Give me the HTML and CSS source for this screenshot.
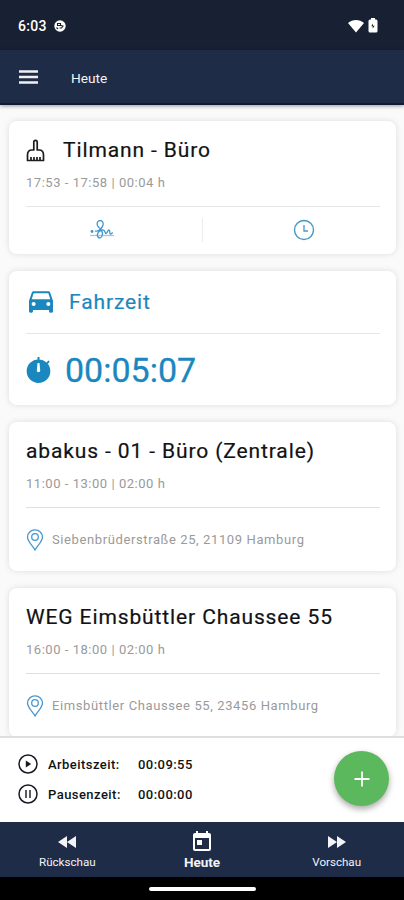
FILE: index.html
```html
<!DOCTYPE html>
<html lang="de">
<head>
    <meta charset="UTF-8">
    <meta name="viewport" content="width=device-width, initial-scale=1">
    <title>Heute</title>
    <link rel="stylesheet" href="styles.css">
</head>
<body>
    <div class="status">
        <span class="clock">6:03</span>
        <svg class="ball" viewBox="0 0 12 12"><circle cx="6" cy="6" r="5.700" fill="#fff"/><path d="M3.500 3.500h3v2h-3zM7 5.500l2 .5-1.500 2H5.500M2.500 7.500L4 9" fill="none" stroke="#182033" stroke-width="1.100"/></svg>
        <svg class="wifi" viewBox="0 0 16 14"><path d="M0 4C4.600 0 11.400 0 16 4L8 13.500z" fill="#fff"/></svg>
        <svg class="battery" viewBox="0 0 10 15"><path d="M3 0h4v1.500h1q1.500 0 1.500 1.500v10q0 1.500-1.500 1.500H2Q.5 14.500.5 13V3Q.5 1.500 2 1.500h1z" fill="#fff"/><path d="M5 5.500L3.300 8.300h1.400V10.500L6.700 7.700H5z" fill="#182033"/></svg>
    </div>
    <header class="appbar">
        <svg class="burger" viewBox="0 0 20 14"><path d="M0 1.500h19M0 7h19M0 12.500h19" stroke="#f1eff0" stroke-width="2.500"/></svg>
        <h1>Heute</h1>
    </header>

    <main class="list">
        <section class="card done">
            <div class="title">
                <svg class="broom" viewBox="0 0 19 23"><path d="M7.800 11V3a1.700 1.700 0 0 1 3.400 0v8h1.800q4.500 0 4.500 5v5.500h-16V16q0-5 4.500-5zM5 21.500V18M8 21.500V18M11 21.500V18M14 21.500V18" fill="none" stroke="#1c1c1c" stroke-width="1.700" stroke-linejoin="round"/></svg>
                <h2>Tilmann - Büro</h2>
            </div>
            <p class="time">17:53 - 17:58 | 00:04 h</p>
            <div class="actions">
                <div class="action">
                    <svg class="sign" viewBox="0 0 24 20"><path d="M0 15.500h24" stroke="#9ccbe6" stroke-width="1.300"/><path d="M5 11c3 1 7-2 8-6 .6-3-1-4.500-3-4.500S6.500 3 7.500 5.500s5 4 5 8-3 5.500-4.500 3.500 0-6.500 4-7 2.500 3.500 4 3.500 1.500-3.500 3-3.500 0 4 1.500 4 1-1.500 2.500-1" fill="none" stroke="#4095cb" stroke-width="1.300"/><circle cx="2" cy="11.500" r="1.400" fill="#4095cb"/></svg>
                </div>
                <div class="action">
                    <svg class="time-icon" viewBox="0 0 22 22"><circle cx="11" cy="11" r="9.500" fill="none" stroke="#4799c5" stroke-width="1.400"/><path d="M11 6v6h4" fill="none" stroke="#4799c5" stroke-width="1.300"/></svg>
                </div>
            </div>
        </section>

        <section class="card drive">
            <div class="title">
                <svg class="car" viewBox="3 4 18 16"><path fill="#1b87bf" d="M18.920 5.010C18.720 4.420 18.160 4 17.500 4h-11c-.66 0-1.210.42-1.420 1.010L3 11v8c0 .55.45 1 1 1h1c.55 0 1-.45 1-1v-1h12v1c0 .55.45 1 1 1h1c.55 0 1-.45 1-1v-8zM6.500 15c-.83 0-1.500-.67-1.500-1.500S5.670 12 6.500 12s1.500.67 1.500 1.500S7.330 15 6.500 15m11 0c-.83 0-1.500-.67-1.500-1.500s.67-1.500 1.500-1.500 1.500.67 1.500 1.500-.67 1.500-1.500 1.500M5 10l1.500-4.500h11L19 10z"/></svg>
                <h2>Fahrzeit</h2>
            </div>
            <div class="timer">
                <svg class="stopwatch" viewBox="0 0 24 26"><circle cx="12" cy="14.200" r="11.800" fill="#1b87bf"/><path d="M12 0v4M20.500 6.500l2-2.500" stroke="#1b87bf" stroke-width="2"/><path d="M11 6h2l.7 7.500a1.700 1.700 0 0 1-3.400 0z" fill="#fff"/></svg>
                <span>00:05:07</span>
            </div>
        </section>

        <section class="card job">
            <h2>abakus - 01 - Büro (Zentrale)</h2>
            <p class="time">11:00 - 13:00 | 02:00 h</p>
            <div class="address">
                <svg class="pin" viewBox="0 0 17 22"><path d="M8.500 21C6 16.500 1 12.500 1 8a7.500 7.200 0 0 1 15 0c0 4.500-5 8.500-7.500 13z" fill="none" stroke="#4a97cf" stroke-width="1.300"/><circle cx="8.500" cy="8" r="3.300" fill="none" stroke="#4a97cf" stroke-width="1.300"/></svg>
                <span>Siebenbrüderstraße 25, 21109 Hamburg</span>
            </div>
        </section>

        <section class="card job">
            <h2>WEG Eimsbüttler Chaussee 55</h2>
            <p class="time">16:00 - 18:00 | 02:00 h</p>
            <div class="address">
                <svg class="pin" viewBox="0 0 17 22"><path d="M8.500 21C6 16.500 1 12.500 1 8a7.500 7.200 0 0 1 15 0c0 4.500-5 8.500-7.500 13z" fill="none" stroke="#4a97cf" stroke-width="1.300"/><circle cx="8.500" cy="8" r="3.300" fill="none" stroke="#4a97cf" stroke-width="1.300"/></svg>
                <span>Eimsbüttler Chaussee 55, 23456 Hamburg</span>
            </div>
        </section>
    </main>

    <div class="summary">
        <div class="totals">
            <svg viewBox="0 0 20 20"><circle cx="10" cy="10" r="9" fill="none" stroke="#171a22" stroke-width="1.500"/><path d="M7.800 6.500v7l5.400-3.500z" fill="#171a22"/></svg>
            <span>Arbeitszeit:</span>
            <span>00:09:55</span>
            <svg viewBox="0 0 20 20"><circle cx="10" cy="10" r="9" fill="none" stroke="#171a22" stroke-width="1.500"/><path d="M8 6v8M12 6v8" stroke="#171a22" stroke-width="1.400"/></svg>
            <span>Pausenzeit:</span>
            <span>00:00:00</span>
        </div>
        <button class="add" type="button">
            <svg viewBox="0 0 16 16"><path d="M8 .5v15M.5 8h15" stroke="#fff" stroke-width="1.800"/></svg>
        </button>
    </div>

    <nav class="tabs">
        <div class="tab">
            <svg class="skip" viewBox="0 0 18 12"><path d="M9 0v12L0 6zM18 0v12L9 6z" fill="#f2f4f8"/></svg>
            <span>Rückschau</span>
        </div>
        <div class="tab active">
            <svg class="day" viewBox="0 0 18 20"><path fill="#fff" fill-rule="evenodd" d="M3 0h2v2h8V0h2v2h1q2 0 2 2v14q0 2-2 2H2q-2 0-2-2V4q0-2 2-2h1zM2 7v11h14V7zM4 9h5v5H4z"/></svg>
            <span>Heute</span>
        </div>
        <div class="tab">
            <svg class="skip" viewBox="0 0 18 12"><path d="M0 0v12l9-6zM9 0v12l9-6z" fill="#f2f4f8"/></svg>
            <span>Vorschau</span>
        </div>
    </nav>
    <div class="gesture"><div class="handle"></div></div>
</body>
</html>
```
FILE: styles.css
```css
* {
    box-sizing: border-box;
}
body {
    margin: 0;
    height: 900px;
    display: flex;
    flex-direction: column;
    overflow: hidden;
    font-family: Roboto, "Liberation Sans", sans-serif;
    background-color: #fafafa;
    color: #111214;
}
h1, h2, p {
    margin: 0;
    font-weight: 400;
}
svg {
    display: block;
    flex: none;
}

.status {
    flex: none;
    height: 50px;
    padding: 1px 26px 0 18px;
    display: flex;
    align-items: center;
    background-color: #182033;
    color: #fff;
}
.clock {
    font-size: 14px;
    font-weight: 500;
    letter-spacing: 0.3px;
}
.ball {
    width: 12px;
    height: 12px;
    margin-left: 7px;
}
.wifi {
    width: 16px;
    height: 14px;
    margin-left: auto;
}
.battery {
    width: 10px;
    height: 15px;
    margin-left: 4px;
}

.appbar {
    flex: none;
    height: 55px;
    padding-left: 19px;
    display: flex;
    align-items: center;
    background-color: #1f2c47;
    border-bottom: 2px solid #101b38;
    box-shadow: 0 1px 4px rgba(0,0,0,0.4);
    color: #f4f4f6;
    position: relative;
}
.burger {
    width: 20px;
    height: 14px;
}
.appbar h1 {
    margin: 2px 0 0 32px;
    font-size: 13.700px;
}

.list {
    flex: 1;
    min-height: 0;
    overflow: hidden;
    padding: 16px 8px 0 9px;
    display: flex;
    flex-direction: column;
    gap: 17px;
}
.card {
    flex: none;
    padding: 0 16px 0 17px;
    border-radius: 8px;
    background-color: #fff;
    box-shadow: 0 0 6px rgba(0,0,0,0.12);
}
.title {
    display: flex;
    align-items: center;
}
.card h2 {
    font-size: 21px;
    line-height: 26px;
    letter-spacing: 0.880px;
    -webkit-text-stroke: 0.2px;
}
.time {
    font-size: 13px;
    line-height: 16px;
    letter-spacing: 0.530px;
    color: #9a9a9a;
}

.done {
    height: 133px;
    padding-top: 16px;
}
.broom {
    width: 19px;
    height: 23px;
}
.done h2 {
    margin-left: 18px;
}
.done .time {
    margin-top: 12px;
}
.actions {
    margin-top: 15px;
    border-top: 1px solid #e6e6e6;
    height: 47px;
    display: flex;
    align-items: center;
}
.action {
    flex: 1;
    height: 24px;
    display: flex;
    align-items: center;
    justify-content: center;
}
.action:first-child {
    border-right: 1px solid #ececec;
    padding-right: 24px;
    margin-right: 2px;
}
.action:last-child {
    padding-left: 24px;
}
.sign {
    width: 24px;
    height: 20px;
}
.time-icon {
    width: 22px;
    height: 22px;
}

.drive {
    height: 134px;
    color: #1b87bf;
}
.drive .title {
    height: 63px;
    border-bottom: 1px solid #e6e6e6;
    padding-left: 3px;
}
.car {
    width: 24px;
    height: 22px;
}
.drive h2 {
    margin-left: 16px;
}
.timer {
    height: 71px;
    display: flex;
    align-items: center;
    font-size: 34px;
    -webkit-text-stroke: 0.3px;
}
.timer span {
    margin-left: 14px;
}
.stopwatch {
    width: 25px;
    height: 26px;
}

.job {
    height: 149px;
    padding-top: 16px;
}
.job .time {
    margin-top: 12px;
}
.address {
    margin-top: 15px;
    border-top: 1px solid #e0e0e0;
    height: 64px;
    display: flex;
    align-items: center;
    font-size: 13px;
    letter-spacing: 0.610px;
    color: #9a9a9a;
}
.pin {
    width: 18px;
    height: 22px;
    margin-right: 8px;
}

.summary {
    flex: none;
    height: 86px;
    padding: 0 15px 0 18px;
    display: flex;
    align-items: center;
    justify-content: space-between;
    background-color: #fff;
    border-top: 2px solid #dedede;
}
.totals {
    display: grid;
    grid-template-columns: 30px 90px auto;
    row-gap: 10px;
    padding-bottom: 2px;
    align-items: center;
    font-size: 13px;
    font-weight: 500;
    letter-spacing: 0.450px;
}
.totals svg {
    width: 20px;
    height: 20px;
}
.add {
    width: 55px;
    height: 55px;
    margin-bottom: 3px;
    padding: 0;
    border: 0;
    border-radius: 50%;
    background-color: #5cb85c;
    box-shadow: 0 3px 6px rgba(0,0,0,0.35);
    display: flex;
    align-items: center;
    justify-content: center;
}
.add svg {
    width: 16px;
    height: 16px;
}

.tabs {
    flex: none;
    height: 55px;
    display: flex;
    background-color: #1f2c47;
    color: #f2f4f8;
}
.tab {
    flex: 1;
    display: flex;
    flex-direction: column;
    align-items: center;
    font-size: 11.600px;
    line-height: 14px;
}
.skip {
    width: 18px;
    height: 12px;
    margin: 14px 0 7px;
}
.day {
    width: 18px;
    height: 20px;
    margin: 9px 0 4px;
}
.active {
    font-size: 13.500px;
    font-weight: 700;
}

.gesture {
    flex: none;
    height: 23px;
    background-color: #000;
    display: flex;
    align-items: center;
    justify-content: center;
}
.handle {
    width: 107px;
    height: 4px;
    border-radius: 2px;
    background-color: #fff;
}
```
